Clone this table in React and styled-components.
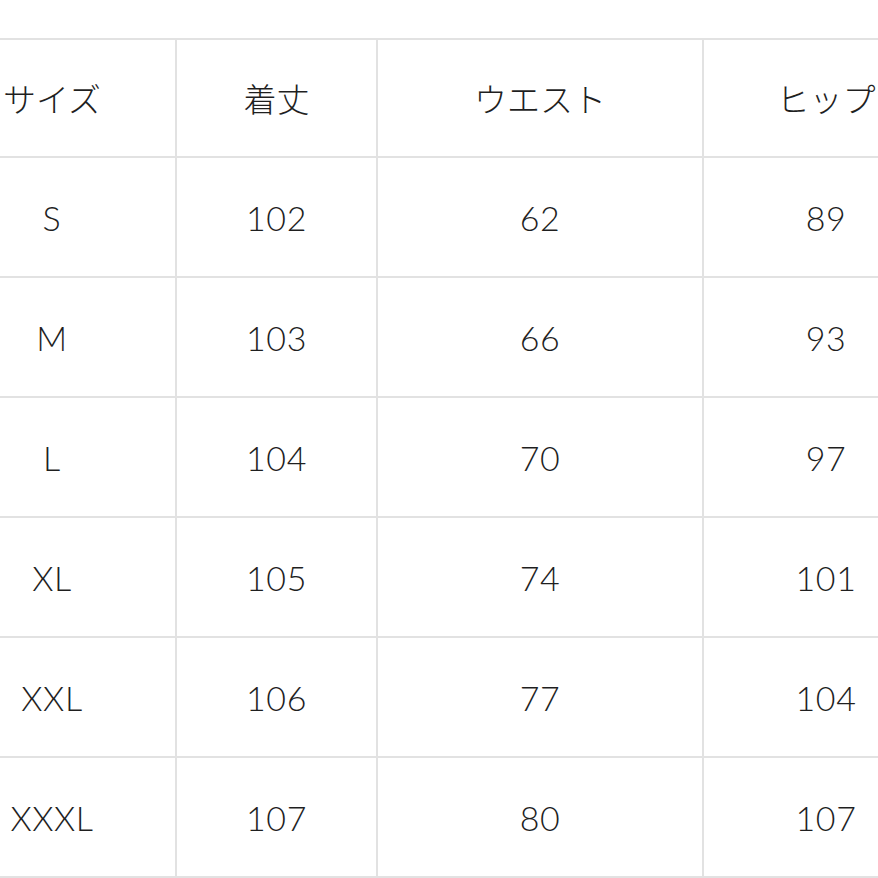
import React from "react";
import styled, { createGlobalStyle } from "styled-components";

const GlobalStyle = createGlobalStyle`
  html, body {
    margin: 0;
    padding: 0;
    background: #ffffff;
    overflow: hidden;
  }
`;

const Page = styled.div`
  width: 878px;
  height: 878px;
  overflow: hidden;
  background: #ffffff;
  padding-top: 38px;
  box-sizing: border-box;
`;

const Grid = styled.div`
  display: grid;
  grid-template-columns: 246px 199px 324px 244px;
  grid-template-rows: 116px repeat(6, 118px);
  gap: 2px;
  padding: 2px;
  margin-left: -73px;
  width: max-content;
  background: #e2e2e2;
`;

const Cell = styled.div`
  background: #ffffff;
  display: flex;
  align-items: center;
  justify-content: center;
  font-family: Lato, "Noto Sans CJK JP", sans-serif;
  font-size: ${(p) => (p.$head ? "33px" : "34px")};
  font-weight: 300;
  color: #1f1f1f;
  letter-spacing: ${(p) => (p.$head ? "0px" : "0.6px")};
`;

const headers = ["サイズ", "着丈", "ウエスト", "ヒップ"];

const rows = [
  ["S", 102, 62, 89],
  ["M", 103, 66, 93],
  ["L", 104, 70, 97],
  ["XL", 105, 74, 101],
  ["XXL", 106, 77, 104],
  ["XXXL", 107, 80, 107],
];

const App = () => {
  return (
    <Page>
      <GlobalStyle />
      <Grid>
        {headers.map((h) => (
          <Cell key={h} $head>
            {h}
          </Cell>
        ))}
        {rows.map((r) =>
          r.map((v, i) => <Cell key={r[0] + "-" + i}>{v}</Cell>)
        )}
      </Grid>
    </Page>
  );
};

export default App;
